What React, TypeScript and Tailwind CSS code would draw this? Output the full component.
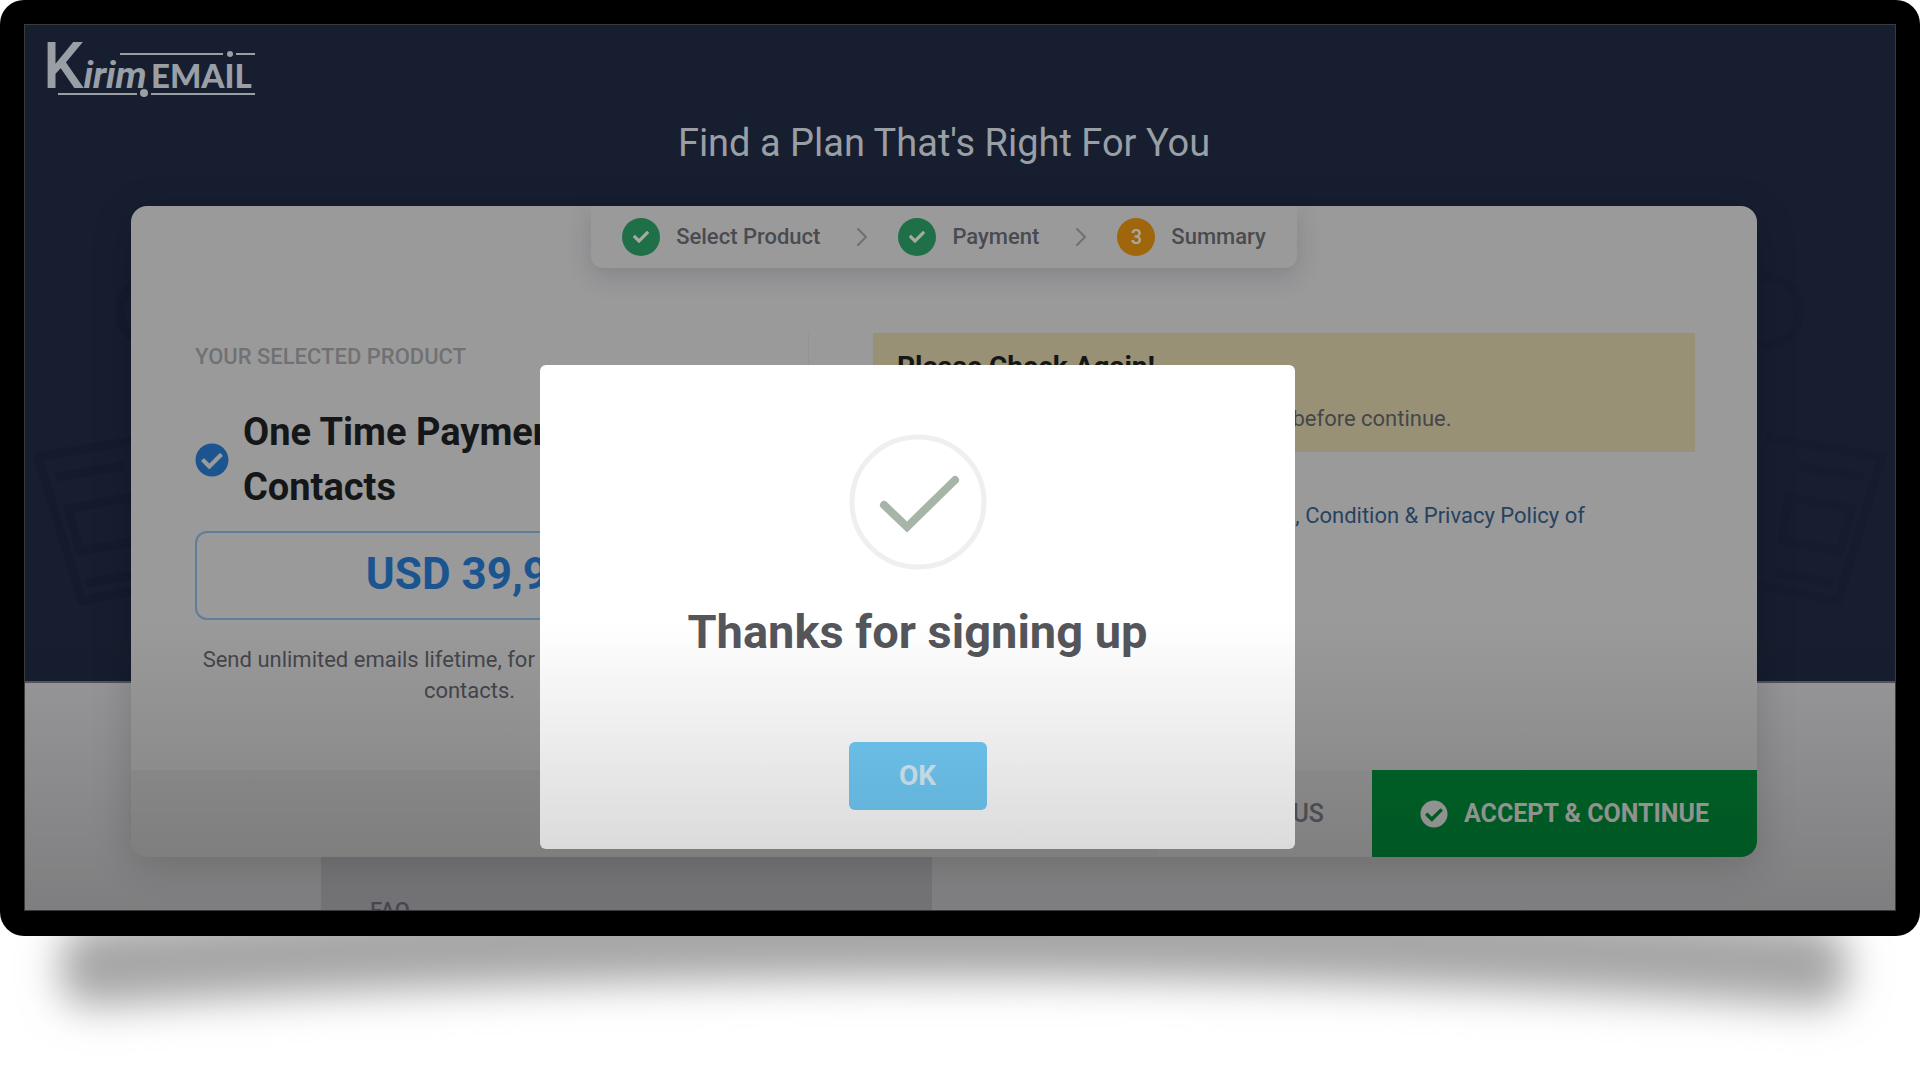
import { FaCheck, FaCheckCircle } from 'react-icons/fa'
import { ChevronRight } from 'lucide-react'

const steps = [
  { label: 'Select Product', done: true },
  { label: 'Payment', done: true },
  { label: 'Summary', done: false },
]

const Logo = () => (
  <svg viewBox="0 -7 216 75" className="w-[216px] h-[75px] shrink-0" fill="#9a9fa6" role="img" aria-label="Kirim.Email">
    <text x="-1" y="57" fontFamily="Roboto" fontWeight="500">
      <tspan fontSize="64">K</tspan>
      <tspan fontSize="37" fontStyle="italic" fontWeight="700">irim</tspan>
    </text>
    <text x="107" y="57" fontSize="33" fontFamily="Lato" fontWeight="900">EMAIL</text>
    <rect x="76" y="22" width="103" height="2" />
    <rect x="192" y="22" width="19" height="2" />
    <rect x="14" y="62" width="79" height="2" />
    <rect x="107" y="62" width="104" height="2" />
    <circle cx="186" cy="23" r="3" />
    <circle cx="100" cy="62" r="4" />
  </svg>
)

// faint doodles on the navy header
const Doodles = () => (
  <svg viewBox="0 0 150 420" className="w-[150px] h-[420px] opacity-30" fill="none" stroke="#141a2a" strokeWidth="9" strokeLinejoin="round">
    <circle cx="20" cy="50" r="34" />
    <path d="M20 176 L136 196 L92 340 L4 322" />
    <path d="M50 205 L118 216 M42 236 L106 248 L94 290 L36 280 Z M30 312 L88 322" />
  </svg>
)

const Stepper = () => (
  <ol className="flex items-center self-center h-[62px] px-[31px] rounded-b-xl bg-[#9a9a9b] shadow-[0_8px_24px_rgba(40,30,40,0.18)]">
    {steps.map((step, i) => (
      <li key={step.label} className="flex items-center">
        {i > 0 && <ChevronRight className="w-8 h-8 ml-[26px] mr-5 text-[#707074]" strokeWidth={1.5} />}
        <span className={`flex items-center justify-center w-[38px] h-[38px] rounded-full text-xl font-medium text-[#a9a9a4] ${step.done ? 'bg-[#1f7048]' : 'bg-[#a0660c]'}`}>
          {step.done ? <FaCheck className="w-4 h-4" /> : i + 1}
        </span>
        <span className="ml-4 text-[22px] leading-7 font-medium text-[#4a4b50]">{step.label}</span>
      </li>
    ))}
  </ol>
)

const Product = () => (
  <section className="w-[677px] shrink-0 px-16">
    <h2 className="mt-[10px] text-[22px] leading-7 font-medium text-[#717174]">YOUR SELECTED PRODUCT</h2>
    <div className="flex items-center mt-[34px]">
      <FaCheckCircle className="w-[34px] h-[34px] shrink-0 text-[#1c5490]" />
      <h3 className="ml-[14px] text-[38px] leading-[55px] font-bold text-[#151618]">One Time Payment 10.000 Contacts</h3>
    </div>
    <div className="flex items-center justify-center h-[89px] mt-4 pb-1 rounded-xl border-2 border-[#5f7e9b] text-[44px] font-bold text-[#1c5490]">
      USD 39,99
    </div>
    <p className="mt-6 text-[22px] leading-[31px] text-center text-[#45464b]">
      Send unlimited emails lifetime, for up to 10.000 of your contacts.
    </p>
  </section>
)

const Notice = () => (
  <section className="flex-1 pl-16 pr-[62px] border-l border-[#949495] text-[22px] leading-7">
    <div className="h-[119px] px-6 pt-4 bg-[#999176]">
      <h3 className="text-[28px] leading-9 font-bold text-[#151618]">Please Check Again!</h3>
      <p className="mt-5 text-[#45464b]">
        <span className="inline-block w-[390px]">Please check your order detail</span> before continue.
      </p>
    </div>
    <label className="flex items-center mt-[50px] text-[#45464b]">
      <input type="checkbox" className="w-5 h-5 ml-6 mr-4" />
      <span className="w-[351px]">By continuing you agree to Term</span>
      <a href="#terms" className="text-[#27425f]">s, Condition &amp; Privacy Policy of</a>
    </label>
  </section>
)

const Modal = () => (
  <div role="dialog" aria-labelledby="modal-title" className="absolute z-20 top-[341px] left-[516px] w-[755px] h-[484px] flex flex-col items-center rounded-md bg-white">
    <svg viewBox="0 0 138 136" className="w-[138px] h-[136px] mt-[69px]" fill="none">
      <ellipse cx="69" cy="68" rx="66" ry="65" stroke="#efefef" strokeWidth="5" />
      <path d="M35 71 L58 93 L106 46" stroke="#a7b4a8" strokeWidth="8" strokeLinecap="round" />
    </svg>
    <h1 id="modal-title" className="mt-8 text-[47px] leading-[60px] font-bold text-[#54565b]">Thanks for signing up</h1>
    <button className="w-[138px] h-[68px] mt-20 rounded-md bg-[#72ccf8] text-[28px] font-bold text-[#d8eefa]">OK</button>
  </div>
)

export default function App() {
  return (
    <div className="bg-white overflow-hidden font-['Roboto',sans-serif]">
      <div className="relative z-10 p-6 pb-[25px] bg-black rounded-[24px]">
        <main className="relative overflow-hidden aspect-[1872/887] bg-[#9a9a9c]">
          <div className="absolute inset-x-0 top-0 h-[659px] bg-[#161e30] border-b-2 border-[#55565a]">
            <div className="absolute right-0 bottom-0"><Doodles /></div>
            <div className="absolute left-0 bottom-0 -scale-x-100"><Doodles /></div>
          </div>

          <div className="relative flex flex-col mr-8">
            <header className="flex flex-col h-[182px]">
              <a href="#home" className="self-start ml-5"><Logo /></a>
              <h1 className="mt-5 text-center text-[38px] leading-[48px] text-[#9a9fa6]">Find a Plan That's Right For You</h1>
            </header>

            <div className="relative z-10 flex flex-col h-[651px] mx-[107px] rounded-2xl bg-[#9a9a9b] shadow-[0_8px_40px_rgba(0,0,0,0.18)]">
              <Stepper />
              <div className="flex flex-1 pt-[65px]">
                <Product />
                <Notice />
              </div>
              <footer className="flex justify-end h-[87px] shrink-0 overflow-hidden rounded-b-2xl bg-[#949494]">
                <button className="px-12 text-[25px] font-medium text-[#55565c] bg-[#969697]">PREVIOUS</button>
                <button className="flex items-center px-12 bg-[#006629] text-[25px] font-bold text-[#a3a6a2]">
                  <FaCheckCircle className="w-7 h-7 mr-4" />
                  ACCEPT &amp; CONTINUE
                </button>
              </footer>
            </div>

            <section className="w-[611px] ml-[297px] pl-[49px] pt-10 bg-[#8b8b8f]">
              <h2 className="text-[22px] leading-7 font-medium text-[#55565e]">FAQ</h2>
            </section>
          </div>

          <Modal />
          <div className="absolute z-30 inset-x-0 bottom-0 h-[290px] pointer-events-none bg-linear-to-b from-black/0 to-black/18" />
          <div className="absolute z-30 inset-0 pointer-events-none border border-[#3a3a3c]" />
        </main>
      </div>

      <svg viewBox="0 0 1920 144" preserveAspectRatio="none" className="block w-full h-36 overflow-visible">
        <filter id="soft" x="-10%" y="-60%" width="120%" height="220%">
          <feGaussianBlur stdDeviation="20" />
        </filter>
        <path d="M90 -12 Q62 -8 60 30 Q58 72 92 70 Q960 14 1816 70 Q1850 72 1848 30 Q1846 -8 1818 -12 Q960 -72 90 -12 Z" fill="#a6a6a6" filter="url(#soft)" />
      </svg>
    </div>
  )
}
